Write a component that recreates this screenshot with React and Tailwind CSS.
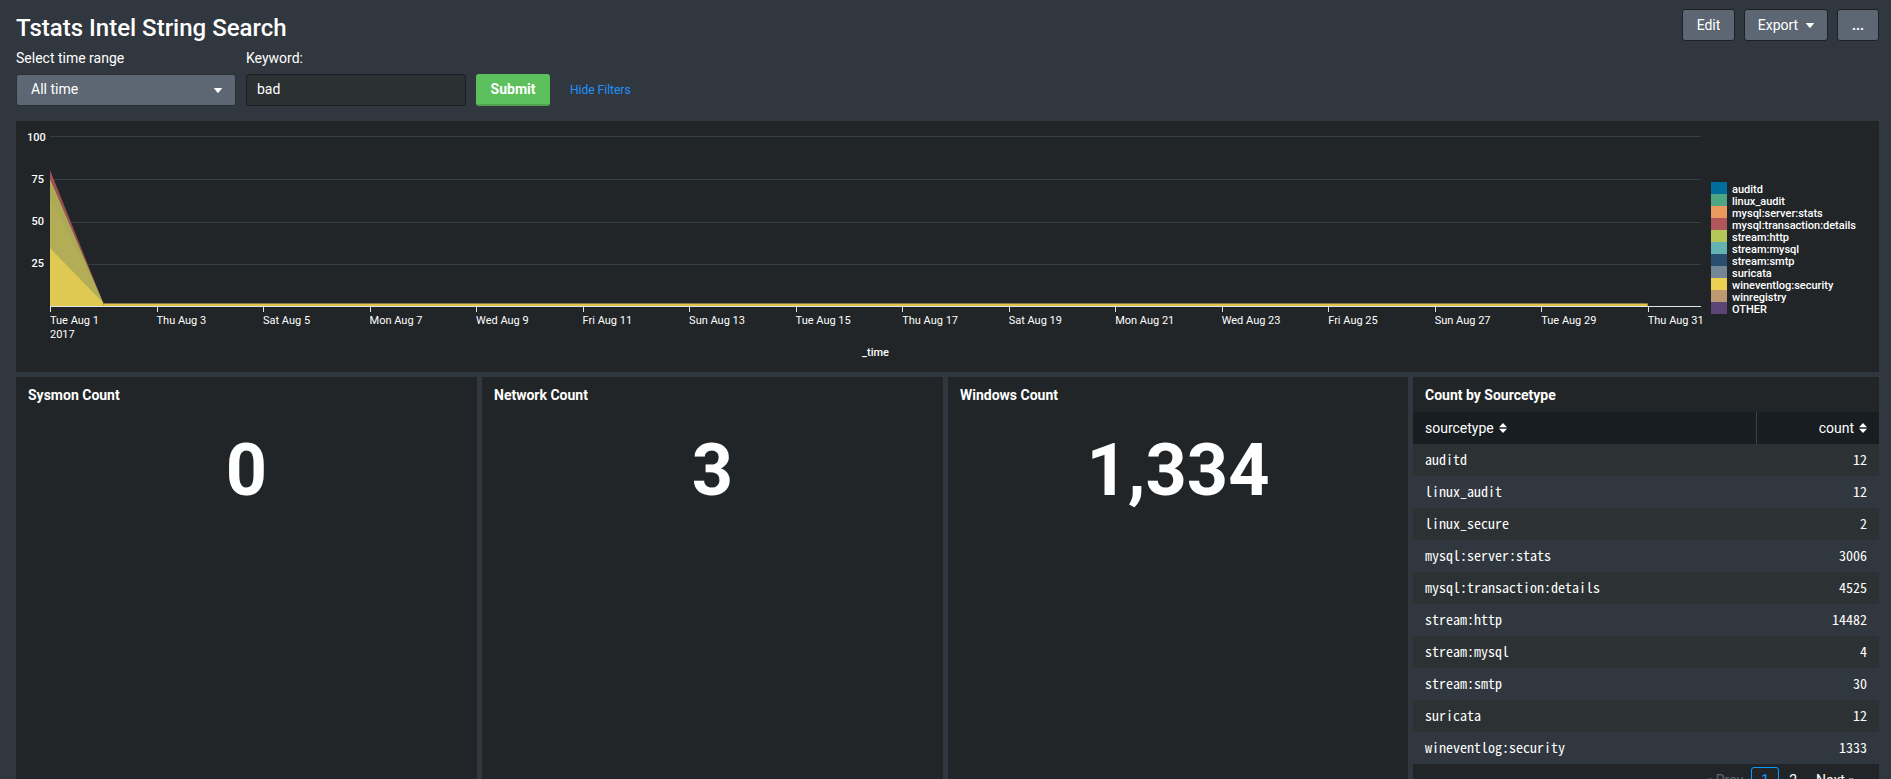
const GRID_LINES = [0, 43, 86, 128];
const Y_LABELS = ["100", "75", "50", "25"];
const DAYS = [
  "Tue Aug 1", "Thu Aug 3", "Sat Aug 5", "Mon Aug 7", "Wed Aug 9", "Fri Aug 11",
  "Sun Aug 13", "Tue Aug 15", "Thu Aug 17", "Sat Aug 19", "Mon Aug 21",
  "Wed Aug 23", "Fri Aug 25", "Sun Aug 27", "Tue Aug 29", "Thu Aug 31",
];
const LEGEND = [
  ["auditd", "bg-[#006d9c]"],
  ["linux_audit", "bg-[#4fa484]"],
  ["mysql:server:stats", "bg-[#ec9960]"],
  ["mysql:transaction:details", "bg-[#af575a]"],
  ["stream:http", "bg-[#b6c75a]"],
  ["stream:mysql", "bg-[#62b3b2]"],
  ["stream:smtp", "bg-[#294e70]"],
  ["suricata", "bg-[#738795]"],
  ["wineventlog:security", "bg-[#edd051]"],
  ["winregistry", "bg-[#bd9872]"],
  ["OTHER", "bg-[#5a4575]"],
];
const ROWS = [
  ["auditd", 12],
  ["linux_audit", 12],
  ["linux_secure", 2],
  ["mysql:server:stats", 3006],
  ["mysql:transaction:details", 4525],
  ["stream:http", 14482],
  ["stream:mysql", 4],
  ["stream:smtp", 30],
  ["suricata", 12],
  ["wineventlog:security", 1333],
];
const STATS = [
  ["Sysmon Count", "0"],
  ["Network Count", "3"],
  ["Windows Count", "1,334"],
];

function Caret({ className = "" }) {
  return (
    <svg className={`h-[5px] w-2 ${className}`} viewBox="0 0 8 5" fill="currentColor" aria-hidden="true">
      <path d="M0.3 0h7.4q.4.1.2.5L4.4 4.8q-.4.3-.8 0L.1.5Q-.1.1.3 0z" />
    </svg>
  );
}

function SortIcon() {
  return (
    <svg className="h-[10px] w-2" viewBox="0 0 8 10" fill="currentColor" aria-hidden="true">
      <path d="M4 0l4 4.3H0zM4 10L0 5.7h8z" />
    </svg>
  );
}

function ToolButton({ children, className = "" }) {
  return (
    <button
      type="button"
      className={`flex h-8 items-center justify-center gap-2 rounded-[3px] border border-[#1d2126] bg-[#5c6773] text-sm text-white ${className}`}
    >
      {children}
    </button>
  );
}

function Chart() {
  return (
    <section className="flex bg-[#212527] pb-3 pl-[11px] pr-[18px] pt-[15px]">
      <div className="flex w-[23px] shrink-0 flex-col pr-[6px] pt-[2px] text-right text-[11px] font-medium leading-4">
        {Y_LABELS.map((label) => (
          <div key={label} className="-mt-2 h-[50px]">{label}</div>
        ))}
      </div>
      <div className="min-w-0 flex-1">
        <svg className="block h-[170px] w-full" viewBox="0 0 31 170" preserveAspectRatio="none" aria-label="Events over time">
          {GRID_LINES.map((y) => (
            <rect key={y} x="0" y={y} width="31" height="1" fill="#324046" />
          ))}
          <path d="M0 34L1 167V170H0z" fill="#9c5053" />
          <path d="M0 43L1 167V170H0z" fill="#abab55" />
          <path d="M0 61L1 167V170H0z" fill="#b4ad58" />
          <path d="M0 112L1 167V170H0z" fill="#dfc953" />
          <rect x="1" y="167" width="29" height="1" fill="#8b7a45" />
          <rect x="1" y="168" width="29" height="2" fill="#e0c34f" />
        </svg>
        <div className="grid grid-cols-[repeat(31,minmax(0,1fr))] border-t border-[#dfe3e6] text-[11px] leading-[14px]">
          {DAYS.map((day, i) => (
            <div key={day} className={i === DAYS.length - 1 ? "col-span-1" : "col-span-2"}>
              <div className="h-[5px] w-px bg-[#dfe3e6]" />
              <div className="whitespace-nowrap pt-[2px]">
                {day}
                {i === 0 && <div>2017</div>}
              </div>
            </div>
          ))}
        </div>
        <div className="pt-1 text-center text-[11px] font-medium leading-[14px]">_time</div>
      </div>
      <ul className="ml-[10px] mt-[46px] w-[150px] shrink-0 text-[11px] font-medium leading-4">
        {LEGEND.map(([name, color]) => (
          <li key={name} className="flex h-3 gap-[5px]">
            <span className={`h-3 w-4 shrink-0 ${color}`} />
            <span>{name}</span>
          </li>
        ))}
      </ul>
    </section>
  );
}

function SourcetypeTable() {
  return (
    <section className="bg-[#212527]">
      <h2 className="px-3 pb-[7px] pt-2 text-sm font-bold leading-5">Count by Sourcetype</h2>
      <table className="w-full border-collapse">
        <thead>
          <tr className="h-8 bg-[#171d21] text-sm">
            <th scope="col" className="border-r border-[#3a444c] px-3 py-0 text-left font-normal">
              <span className="flex items-center gap-[5px]">sourcetype <SortIcon /></span>
            </th>
            <th scope="col" className="w-[123px] px-3 py-0 font-normal">
              <span className="flex items-center justify-end gap-[5px]">count <SortIcon /></span>
            </th>
          </tr>
        </thead>
        <tbody className="font-['Noto_Sans_Mono_CJK_SC','Liberation_Mono',monospace] text-sm leading-[18px]">
          {ROWS.map(([name, count]) => (
            <tr key={name} className="h-8 odd:bg-[#2c3133] even:bg-[#31373e]">
              <td className="px-3 pb-[2px] pt-0">{name}</td>
              <td className="px-3 pb-[2px] pt-0 text-right">{count}</td>
            </tr>
          ))}
        </tbody>
      </table>
      <nav className="flex items-center justify-end pb-2 pr-6 pt-[3px] text-sm leading-5" aria-label="Pages">
        <span className="mr-2 text-[#5c6773]">« Prev</span>
        <a href="#1" className="rounded-[3px] border border-[#0c9cff] px-[9px] py-[2px] text-[#1e93ff]">1</a>
        <a href="#2" className="px-[10px]">2</a>
        <a href="#next" className="pl-[9px]">Next »</a>
      </nav>
    </section>
  );
}

export default function App() {
  return (
    <main className="min-h-screen bg-[#31373e] pb-2 pl-4 pr-3 font-['Roboto','Liberation_Sans',sans-serif] text-white">
      <header className="flex items-start justify-between pt-[9px]">
        <h1 className="pt-1 text-2xl font-medium leading-[30px]">Tstats Intel String Search</h1>
        <div className="flex gap-[9px]">
          <ToolButton className="w-[53px]">Edit</ToolButton>
          <ToolButton className="w-[84px]">Export <Caret /></ToolButton>
          <ToolButton className="w-[42px] font-bold">...</ToolButton>
        </div>
      </header>
      <form className="flex items-end pb-[15px] pt-[5px]" onSubmit={(e) => e.preventDefault()}>
        <div>
          <label htmlFor="range" className="block pb-[6px] text-sm leading-5">Select time range</label>
          <div className="relative">
            <select
              id="range"
              className="block h-8 w-[220px] appearance-none rounded-[3px] border border-[#2b3037] bg-[#5c6773] pb-[2px] pl-[14px] text-sm text-white"
            >
              <option>All time</option>
            </select>
            <Caret className="pointer-events-none absolute right-[14px] top-[14px]" />
          </div>
        </div>
        <div className="ml-[10px]">
          <label htmlFor="keyword" className="block pb-[6px] text-sm leading-5">Keyword:</label>
          <input
            id="keyword"
            defaultValue="bad"
            className="block h-8 w-[220px] rounded-[3px] border border-[#1a1e21] bg-[#2b3033] px-[10px] pb-[2px] text-sm text-white"
          />
        </div>
        <button type="submit" className="ml-[10px] h-8 w-[74px] rounded-[3px] border-b-2 border-[#53a051] bg-[#5cc05c] text-sm font-bold">
          Submit
        </button>
        <a href="#filters" className="ml-5 text-xs leading-8 text-[#1e93ff]">Hide Filters</a>
      </form>
      <Chart />
      <div className="mt-[5px] grid grid-cols-[461fr_461fr_460fr_466fr] gap-[5px]">
        {STATS.map(([title, value]) => (
          <section key={title} className="bg-[#212527]">
            <h2 className="px-3 pt-2 text-sm font-bold leading-5">{title}</h2>
            <p className="pt-[22px] text-center text-[72px] font-bold leading-[88px]">{value}</p>
          </section>
        ))}
        <SourcetypeTable />
      </div>
    </main>
  );
}
